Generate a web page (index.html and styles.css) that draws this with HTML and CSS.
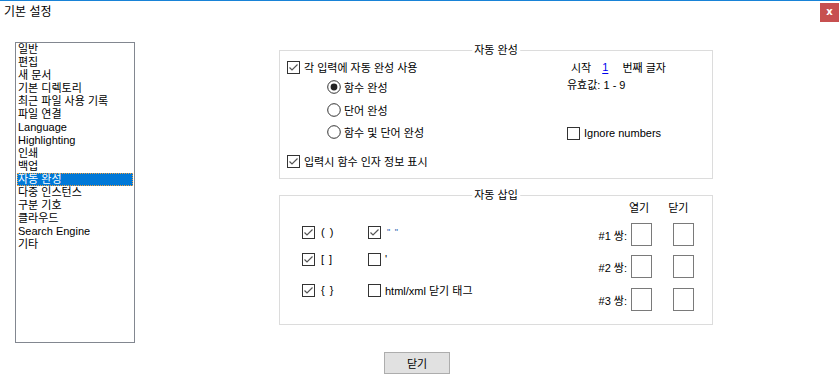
FILE: index.html
```html
<!DOCTYPE html>
<html lang="ko">
<head>
<meta charset="utf-8">
<title>기본 설정</title>
<link rel="stylesheet" href="styles.css">
</head>
<body>
<div class="window">
  <div class="titlebar">
    <span class="title">기본 설정</span>
    <span class="close">x</span>
  </div>
  <div class="main">
    <ul class="list">
      <li>일반</li>
      <li>편집</li>
      <li>새 문서</li>
      <li>기본 디렉토리</li>
      <li>최근 파일 사용 기록</li>
      <li>파일 연결</li>
      <li>Language</li>
      <li>Highlighting</li>
      <li>인쇄</li>
      <li>백업</li>
      <li class="selected">자동 완성</li>
      <li>다중 인스턴스</li>
      <li>구분 기호</li>
      <li>클라우드</li>
      <li>Search Engine</li>
      <li>기타</li>
    </ul>
    <div class="panel">
      <div class="group group-top">
        <span class="legend">자동 완성</span>
        <div class="col-left">
          <div class="row">
            <svg class="cb" width="13" height="13" viewBox="0 0 13 13"><rect x="0.5" y="0.5" width="12" height="12" fill="#fff" stroke="#333"/><path d="M2.5 6.5 L5 9 L10.5 3.5" fill="none" stroke="#555" stroke-width="1.2"/></svg>
            <span>각 입력에 자동 완성 사용</span>
          </div>
          <div class="row radio-row">
            <svg class="rb" width="14" height="14" viewBox="0 0 14 14"><circle cx="7" cy="7" r="6.3" fill="#fff" stroke="#333"/><circle cx="7" cy="7" r="3.4" fill="#222"/></svg>
            <span>함수 완성</span>
          </div>
          <div class="row radio-row gap3">
            <svg class="rb" width="14" height="14" viewBox="0 0 14 14"><circle cx="7" cy="7" r="6.3" fill="#fff" stroke="#333"/></svg>
            <span>단어 완성</span>
          </div>
          <div class="row radio-row gap2">
            <svg class="rb" width="14" height="14" viewBox="0 0 14 14"><circle cx="7" cy="7" r="6.3" fill="#fff" stroke="#333"/></svg>
            <span>함수 및 단어 완성</span>
          </div>
          <div class="row gap9">
            <svg class="cb" width="13" height="13" viewBox="0 0 13 13"><rect x="0.5" y="0.5" width="12" height="12" fill="#fff" stroke="#333"/><path d="M2.5 6.5 L5 9 L10.5 3.5" fill="none" stroke="#555" stroke-width="1.2"/></svg>
            <span>입력시 함수 인자 정보 표시</span>
          </div>
        </div>
        <div class="col-right">
          <div class="row start-row">
            <span>시작</span>
            <span class="num">1</span>
            <span class="nth">번째 글자</span>
          </div>
          <div class="row valid-row"><span>유효값: 1 - 9</span></div>
          <div class="row ignore-row">
            <svg class="cb" width="13" height="13" viewBox="0 0 13 13"><rect x="0.5" y="0.5" width="12" height="12" fill="#fff" stroke="#333"/></svg>
            <span>Ignore numbers</span>
          </div>
        </div>
      </div>
      <div class="group group-bottom">
        <span class="legend">자동 삽입</span>
        <div class="pairs">
          <div class="row pair-row">
            <div class="pair-cell">
              <svg class="cb" width="13" height="13" viewBox="0 0 13 13"><rect x="0.5" y="0.5" width="12" height="12" fill="#fff" stroke="#333"/><path d="M2.5 6.5 L5 9 L10.5 3.5" fill="none" stroke="#555" stroke-width="1.2"/></svg>
              <span class="sym">( )</span>
            </div>
            <div class="pair-cell">
              <svg class="cb" width="13" height="13" viewBox="0 0 13 13"><rect x="0.5" y="0.5" width="12" height="12" fill="#fff" stroke="#333"/><path d="M2.5 6.5 L5 9 L10.5 3.5" fill="none" stroke="#555" stroke-width="1.2"/></svg>
              <span class="sym quote">" "</span>
            </div>
          </div>
          <div class="row pair-row gap7">
            <div class="pair-cell">
              <svg class="cb" width="13" height="13" viewBox="0 0 13 13"><rect x="0.5" y="0.5" width="12" height="12" fill="#fff" stroke="#333"/><path d="M2.5 6.5 L5 9 L10.5 3.5" fill="none" stroke="#555" stroke-width="1.2"/></svg>
              <span class="sym">[ ]</span>
            </div>
            <div class="pair-cell">
              <svg class="cb" width="13" height="13" viewBox="0 0 13 13"><rect x="0.5" y="0.5" width="12" height="12" fill="#fff" stroke="#333"/></svg>
              <span class="sym tight">'</span>
            </div>
          </div>
          <div class="row pair-row gap11">
            <div class="pair-cell">
              <svg class="cb" width="13" height="13" viewBox="0 0 13 13"><rect x="0.5" y="0.5" width="12" height="12" fill="#fff" stroke="#333"/><path d="M2.5 6.5 L5 9 L10.5 3.5" fill="none" stroke="#555" stroke-width="1.2"/></svg>
              <span class="sym">{ }</span>
            </div>
            <div class="pair-cell">
              <svg class="cb" width="13" height="13" viewBox="0 0 13 13"><rect x="0.5" y="0.5" width="12" height="12" fill="#fff" stroke="#333"/></svg>
              <span class="sym tight">html/xml 닫기 태그</span>
            </div>
          </div>
        </div>
        <div class="custom">
          <div class="custom-head">
            <span class="head open">열기</span>
            <span class="head close-h">닫기</span>
          </div>
          <div class="custom-row first">
            <span class="label">#1 쌍:</span>
            <span class="field"></span>
            <span class="field second"></span>
          </div>
          <div class="custom-row r2">
            <span class="label">#2 쌍:</span>
            <span class="field"></span>
            <span class="field second"></span>
          </div>
          <div class="custom-row r3">
            <span class="label">#3 쌍:</span>
            <span class="field"></span>
            <span class="field second"></span>
          </div>
        </div>
      </div>
    </div>
  </div>
  <div class="footer">
    <button class="btn">닫기</button>
  </div>
</div>
</body>
</html>
```
FILE: styles.css
```css
* { box-sizing: border-box; }
html, body { margin: 0; padding: 0; background: #fff; }
body {
  width: 840px;
  height: 384px;
  overflow: hidden;
  font-family: "Liberation Sans", "Noto Sans CJK KR", sans-serif;
  font-size: 11px;
  color: #000;
}
.window { display: flex; flex-direction: column; width: 840px; height: 384px; }

.titlebar {
  height: 24px;
  border-top: 1px solid #1883d7;
  display: flex;
  align-items: flex-start;
}
.title {
  font-size: 12px;
  line-height: 22px;
  padding-left: 4px;
  color: #000;
}
.close {
  margin-left: auto;
  margin-top: 2px;
  margin-right: 1px;
  width: 19px;
  height: 19px;
  background: #c75050;
  color: #fff;
  font-family: "DejaVu Sans", sans-serif;
  font-weight: bold;
  font-size: 10px;
  line-height: 17px;
  text-align: center;
}

.main {
  display: flex;
  padding: 18px 0 0 15px;
  height: 318px;
}
.list {
  list-style: none;
  margin: 0;
  padding: 0;
  width: 120px;
  height: 301px;
  border: 1px solid #828790;
  flex: none;
}
.list li {
  height: 13px;
  line-height: 13px;
  padding-left: 2px;
  margin: 0 1px 0 0;
  white-space: nowrap;
}
.list li.selected {
  background: #0078d7;
  color: #fff;
  outline: 1px dotted #f0a040;
  outline-offset: -1px;
  margin-left: 1px;
  padding-left: 1px;
}

.panel {
  margin-left: 144px;
  padding-top: 8px;
  width: 434px;
  display: flex;
  flex-direction: column;
}
.group {
  position: relative;
  border: 1px solid #dcdcdc;
  display: flex;
}
.legend {
  position: absolute;
  top: -8px;
  left: 50%;
  transform: translateX(-50%);
  background: #fff;
  padding: 0 2px;
  line-height: 14px;
  white-space: nowrap;
}
.group-top {
  height: 129px;
  padding: 6px 0 0 7px;
}
.group-bottom {
  height: 130px;
  margin-top: 16px;
  padding: 0 18px 0 22px;
  justify-content: space-between;
  align-items: flex-start;
}

.row {
  display: flex;
  align-items: center;
  height: 20px;
  white-space: nowrap;
}
.cb { flex: none; margin-right: 4px; }
.rb { flex: none; margin-right: 3px; }
.radio-row { padding-left: 40px; }
.gap2 { margin-top: 2px; }
.gap3 { margin-top: 3px; }
.gap7 { margin-top: 7px; }
.gap9 { margin-top: 9px; }
.gap11 { margin-top: 11px; }

.col-left { width: 280px; flex: none; }
.col-right { display: flex; flex-direction: column; }
.start-row { padding-left: 4px; }
.num {
  margin-left: 11px;
  color: #0000ee;
  text-decoration: underline;
  text-underline-offset: 2px;
}
.nth { margin-left: 14px; }
.valid-row { height: 14px; }
.ignore-row { margin-top: 32px; }

.pairs { display: flex; flex-direction: column; padding-top: 26px; }
.pair-row { height: 20px; }
.pair-cell { display: flex; align-items: center; }
.pair-cell:first-child { width: 66px; }
.sym { margin-left: 2px; letter-spacing: 1px; }
.sym.tight { margin-left: 0; letter-spacing: 0; }
.quote { color: #2a60b0; font-size: 9px; }

.custom { display: flex; flex-direction: column; padding-top: 5px; width: 98px; }
.custom-head {
  display: flex;
  height: 14px;
  line-height: 14px;
  white-space: nowrap;
}
.custom-head .open { margin-left: 33px; }
.custom-head .close-h { margin-left: 19px; }
.custom-row {
  display: flex;
  align-items: center;
  white-space: nowrap;
}
.custom-row.first { margin-top: 8px; }
.custom-row.r2 { margin-top: 9px; }
.custom-row.r3 { margin-top: 10px; }
.label { width: 31px; margin-right: 4px; text-align: right; flex: none; }
.field {
  flex: none;
  width: 21px;
  height: 23px;
  border: 1px solid #7a7a7a;
  background: #fff;
}
.field.second { margin-left: 21px; }

.footer {
  display: flex;
  justify-content: center;
  padding-right: 6px;
  margin-top: 10px;
}
.btn {
  width: 66px;
  height: 22px;
  background: #e1e1e1;
  border: 1px solid #adadad;
  font-family: "Liberation Sans", "Noto Sans CJK KR", sans-serif;
  font-size: 11px;
  color: #000;
  padding: 0;
}
```
